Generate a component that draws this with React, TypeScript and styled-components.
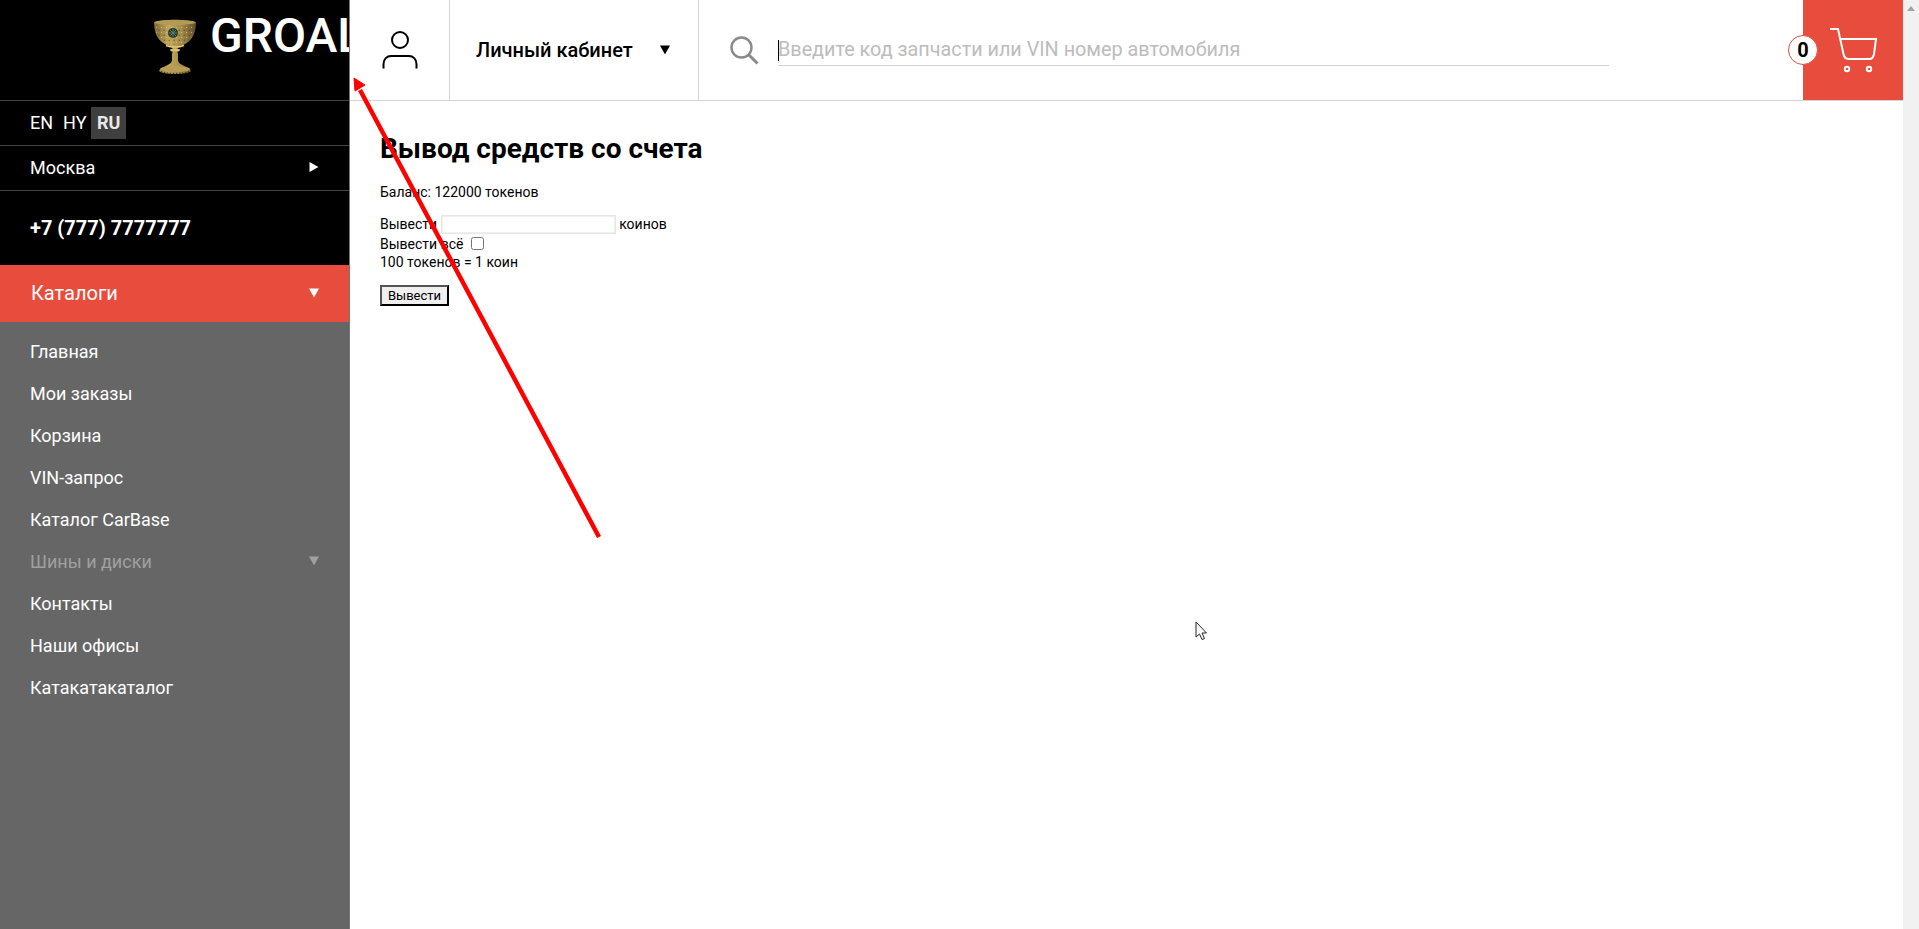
import React from "react";
import styled, { createGlobalStyle } from "styled-components";

const Global = createGlobalStyle`
  html, body { margin: 0; padding: 0; height: 100%; overflow: hidden; background: #fff; }
  body { font-family: Roboto, "Liberation Sans", sans-serif; color: #000; }
  #root { height: 100%; }
`;

const Page = styled.div`
  position: relative;
  display: flex;
  width: 1919px;
  height: 929px;
  overflow: hidden;
  background: #fff;
`;

const Sidebar = styled.aside`
  flex: 0 0 350px;
  width: 350px;
  min-width: 0;
  box-sizing: border-box;
  display: flex;
  flex-direction: column;
  background: #666;
  border-right: 1px solid #777;
`;

const LogoBar = styled.div`
  height: 100px;
  background: #000;
  display: flex;
  align-items: flex-start;
  overflow: hidden;
  padding-left: 153px;
`;

const LogoText = styled.span`
  margin-left: 13px;
  margin-top: 8px;
  font-size: 48px;
  line-height: 56px;
  font-weight: 500;
  color: #fff;
  white-space: nowrap;
`;

const BlackRow = styled.div<{ $h: number; $pad?: number }>`
  box-sizing: border-box;
  height: ${(p) => p.$h}px;
  background: #000;
  border-top: 1px solid #444;
  display: flex;
  align-items: center;
  padding: 0 30px ${(p) => p.$pad ?? 0}px;
  color: #fff;
`;

const Lang = styled.span<{ $active?: boolean; $gap?: number }>`
  font-size: 18px;
  font-weight: ${(p) => (p.$active ? 700 : 400)};
  background: ${(p) => (p.$active ? "#3f3f3f" : "transparent")};
  color: ${(p) => (p.$active ? "#e8e8e8" : "#fff")};
  padding: ${(p) => (p.$active ? "0 5.5px" : "0")};
  height: 32px;
  line-height: 32px;
  margin-right: ${(p) => p.$gap ?? 0}px;
`;

const CityName = styled.span`
  flex: 1;
  font-size: 18px;
`;

const Phone = styled.span`
  font-size: 20px;
  font-weight: 700;
`;

const CatalogRow = styled.div`
  height: 57px;
  background: #e74c3c;
  display: flex;
  align-items: center;
  padding: 0 30px 1px 31px;
  box-sizing: border-box;
  color: #fff;
  font-size: 20px;
`;

const Grow = styled.span`
  flex: 1;
`;

const Menu = styled.nav`
  display: flex;
  flex-direction: column;
  padding-top: 8px;
`;

const MenuItem = styled.a<{ $muted?: boolean }>`
  height: 42px;
  display: flex;
  align-items: center;
  padding: 0 30px;
  font-size: 18px;
  color: ${(p) => (p.$muted ? "#a0a0a0" : "#fff")};
`;

const Main = styled.div`
  flex: 1;
  min-width: 0;
  display: flex;
  flex-direction: column;
`;

const Header = styled.header`
  box-sizing: border-box;
  height: 101px;
  display: flex;
  border-bottom: 1px solid #d4d4d4;
`;

const UserCell = styled.div`
  box-sizing: border-box;
  flex: 0 0 100px;
  border-right: 1px solid #d4d4d4;
  display: flex;
  align-items: flex-start;
  justify-content: center;
  padding-top: 30px;
`;

const CabinetCell = styled.div`
  box-sizing: border-box;
  flex: 0 0 249px;
  border-right: 1px solid #d4d4d4;
  display: flex;
  align-items: center;
  padding: 0 28px 0 26px;
  font-size: 20px;
  font-weight: 500;
`;

const SearchCell = styled.div`
  flex: 1;
  display: flex;
  align-items: flex-start;
  padding: 35px 0 0 30px;
`;

const SearchField = styled.div`
  position: relative;
  width: 831px;
  height: 30px;
  margin-left: 19px;
  border-bottom: 1px solid #d4d4d4;
  font-size: 19.8px;
  line-height: 30px;
  color: #bcbcbc;
  white-space: nowrap;
  &::before {
    content: "";
    position: absolute;
    left: 0;
    top: 5px;
    width: 1px;
    height: 21px;
    background: #000;
  }
`;

const CartCell = styled.div`
  position: relative;
  flex: 0 0 100px;
  background: #e74c3c;
`;

const Badge = styled.span`
  position: absolute;
  left: -15px;
  top: 35px;
  box-sizing: border-box;
  width: 30px;
  height: 30px;
  border-radius: 50%;
  background: #fff;
  border: 1px solid #e74c3c;
  color: #000;
  font-size: 20px;
  font-weight: 700;
  line-height: 28px;
  text-align: center;
`;

const CartIcon = styled.svg`
  position: absolute;
  left: 25px;
  top: 25px;
`;

const Content = styled.main`
  padding: 31px 30px;
  font-size: 14px;
  line-height: 17px;
`;

const Title = styled.h1`
  margin: 0 0 18px;
  font-size: 28px;
  line-height: 34px;
  font-weight: 700;
`;

const Balance = styled.p`
  margin: 0 0 13px;
`;

const FormLine = styled.div<{ $h: number }>`
  display: flex;
  align-items: center;
  height: ${(p) => p.$h}px;
`;

const AmountInput = styled.input`
  box-sizing: border-box;
  width: 175px;
  height: 19px;
  margin: 0 3px 0 4px;
  padding: 0;
  border: 1px solid #e6e6e6;
  outline: 1px solid #f0f0f0;
  outline-offset: -2px;
  background: #fff;
`;

const Check = styled.input`
  margin: 0 0 2px 8px;
  width: 13px;
  height: 13px;
`;

const Submit = styled.button`
  display: block;
  margin-top: 14px;
  box-sizing: border-box;
  width: 69px;
  height: 21px;
  padding: 0;
  border: 2px outset #000;
  background: #efefef;
  font: 400 13px Roboto, sans-serif;
  color: #000;
`;

const Scrollbar = styled.div`
  flex: 0 0 16px;
  background: #f1f1f1;
  display: flex;
  justify-content: center;
  padding-top: 6px;
`;

const ScrollArrow = styled.div`
  width: 0;
  height: 0;
  border-left: 4px solid transparent;
  border-right: 4px solid transparent;
  border-bottom: 5px solid #a3a3a3;
`;

const Annotation = styled.svg`
  position: absolute;
  left: 0;
  top: 0;
  pointer-events: none;
`;

const Tri = ({ dir, color }: { dir: "right" | "down"; color: string }) => (
  <svg width="10" height="10" viewBox="0 0 10 10">
    <path d={dir === "right" ? "M0.5 0 L9.5 5 L0.5 10Z" : "M0 0.5 L10 0.5 L5 9.5Z"} fill={color} />
  </svg>
);

const Goblet = () => (
  <svg width="44" height="56" viewBox="0 0 44 56" style={{ marginTop: 19, flex: "none" }}>
    <defs>
      <linearGradient id="gold" x1="0" x2="1" y1="0" y2="0">
        <stop offset="0" stopColor="#7a6633" />
        <stop offset="0.35" stopColor="#c2a75c" />
        <stop offset="0.65" stopColor="#a58c4a" />
        <stop offset="1" stopColor="#5e4d2b" />
      </linearGradient>
      <pattern id="ornament" width="5" height="5" patternUnits="userSpaceOnUse">
        <circle cx="1.2" cy="1.2" r="0.7" fill="#4a3d1e" opacity="0.7" />
        <circle cx="3.6" cy="3.4" r="0.6" fill="#e2cd85" opacity="0.7" />
      </pattern>
    </defs>
    <path d="M1 3 C8 0 36 0 43 3 C43 16 38 24 27 27 L24 30 L25 35 L25 42 C27 47 36 47 38 52 C34 56 10 56 6 52 C8 47 17 47 19 42 L19 35 L20 30 L17 27 C6 24 1 16 1 3Z" fill="url(#gold)" />
    <path d="M2 6 C8 9 36 9 42 6 C42 16 37 23 27 26 H17 C7 23 2 16 2 6Z" fill="url(#ornament)" />
    <ellipse cx="22" cy="3.5" rx="20.5" ry="2.4" fill="#b39a55" />
    <circle cx="20" cy="14" r="5" fill="#20382f" />
    <path d="M20 9.5 V18.5 M15.5 14 H24.5 M17 11 L23 17 M23 11 L17 17" stroke="#5d7a64" strokeWidth="1" />
    <path d="M13 26.5 C18 28.5 26 28.5 31 26.5" stroke="#e0c878" strokeWidth="1.5" fill="none" />
    <ellipse cx="22" cy="31" rx="5" ry="1.5" fill="#d9bf70" />
    <ellipse cx="22" cy="50" rx="15" ry="3" fill="#b79d58" />
    <path d="M8 52.5 C14 55 30 55 36 52.5" stroke="#4a3d1e" strokeWidth="1.2" strokeDasharray="1.5 1.5" fill="none" />
  </svg>
);

const menu = ["Главная", "Мои заказы", "Корзина", "VIN-запрос", "Каталог CarBase"];
const menu2 = ["Контакты", "Наши офисы", "Катакатакаталог"];

export default function App() {
  return (
    <Page>
      <Global />
      <Sidebar>
        <LogoBar>
          <Goblet />
          <LogoText>GROAL</LogoText>
        </LogoBar>
        <BlackRow $h={45}>
          <Lang $gap={10}>EN</Lang>
          <Lang $gap={5}>HY</Lang>
          <Lang $active>RU</Lang>
        </BlackRow>
        <BlackRow $h={45} $pad={2}>
          <CityName>Москва</CityName>
          <Tri dir="right" color="#fff" />
        </BlackRow>
        <BlackRow $h={75}>
          <Phone>+7 (777) 7777777</Phone>
        </BlackRow>
        <CatalogRow>
          <Grow>Каталоги</Grow>
          <Tri dir="down" color="#fff" />
        </CatalogRow>
        <Menu>
          {menu.map((m) => (
            <MenuItem key={m}>{m}</MenuItem>
          ))}
          <MenuItem $muted>
            <Grow>Шины и диски</Grow>
            <Tri dir="down" color="#a0a0a0" />
          </MenuItem>
          {menu2.map((m) => (
            <MenuItem key={m}>{m}</MenuItem>
          ))}
        </Menu>
      </Sidebar>
      <Main>
        <Header>
          <UserCell>
            <svg width="36" height="40" viewBox="0 0 36 40" fill="none" stroke="#000" strokeWidth="2">
              <circle cx="18" cy="10" r="8" />
              <path d="M1.5 38.5 V34 C1.5 29 5 26 9 26 H27 C31 26 34.5 29 34.5 34 V38.5" />
            </svg>
          </UserCell>
          <CabinetCell>
            <Grow>Личный кабинет</Grow>
            <Tri dir="down" color="#000" />
          </CabinetCell>
          <SearchCell>
            <svg width="30" height="30" viewBox="0 0 30 30" fill="none" stroke="#8a8a8a" strokeWidth="2.4">
              <circle cx="12.5" cy="12.5" r="10" />
              <path d="M20 20 L28.5 28.5" strokeWidth="3" />
            </svg>
            <SearchField>Введите код запчасти или VIN номер автомобиля</SearchField>
          </SearchCell>
          <CartCell>
            <Badge>0</Badge>
            <CartIcon width="50" height="50" viewBox="0 0 50 50" fill="none" stroke="#fff" strokeWidth="2">
              <path d="M2 4 H10 L15.5 29 C16 32 18 34 21 34 H41 C44 34 45.5 32 46 29 L48 14 H12" />
              <circle cx="19" cy="44" r="2.2" />
              <circle cx="41" cy="44" r="2.2" />
            </CartIcon>
          </CartCell>
        </Header>
        <Content>
          <Title>Вывод средств со счета</Title>
          <Balance>Баланс: 122000 токенов</Balance>
          <FormLine $h={21}>
            Вывести
            <AmountInput />
            коинов
          </FormLine>
          <FormLine $h={19}>
            Вывести всё
            <Check type="checkbox" />
          </FormLine>
          <div>100 токенов = 1 коин</div>
          <Submit>Вывести</Submit>
        </Content>
      </Main>
      <Scrollbar>
        <ScrollArrow />
      </Scrollbar>
      <Annotation width="1919" height="929" viewBox="0 0 1919 929">
        <path d="M599 537 L360 90" stroke="#fe0000" strokeWidth="4.5" fill="none" />
        <path d="M354 78 L365 85 L355 91Z" fill="#fe0000" stroke="#fe0000" strokeWidth="1" />
        <path
          d="M1196 622 V637 L1199.5 634 L1202 639.5 L1204.5 638.5 L1202 633 H1206.5Z"
          fill="#fff"
          stroke="#222"
          strokeWidth="1"
        />
      </Annotation>
    </Page>
  );
}
